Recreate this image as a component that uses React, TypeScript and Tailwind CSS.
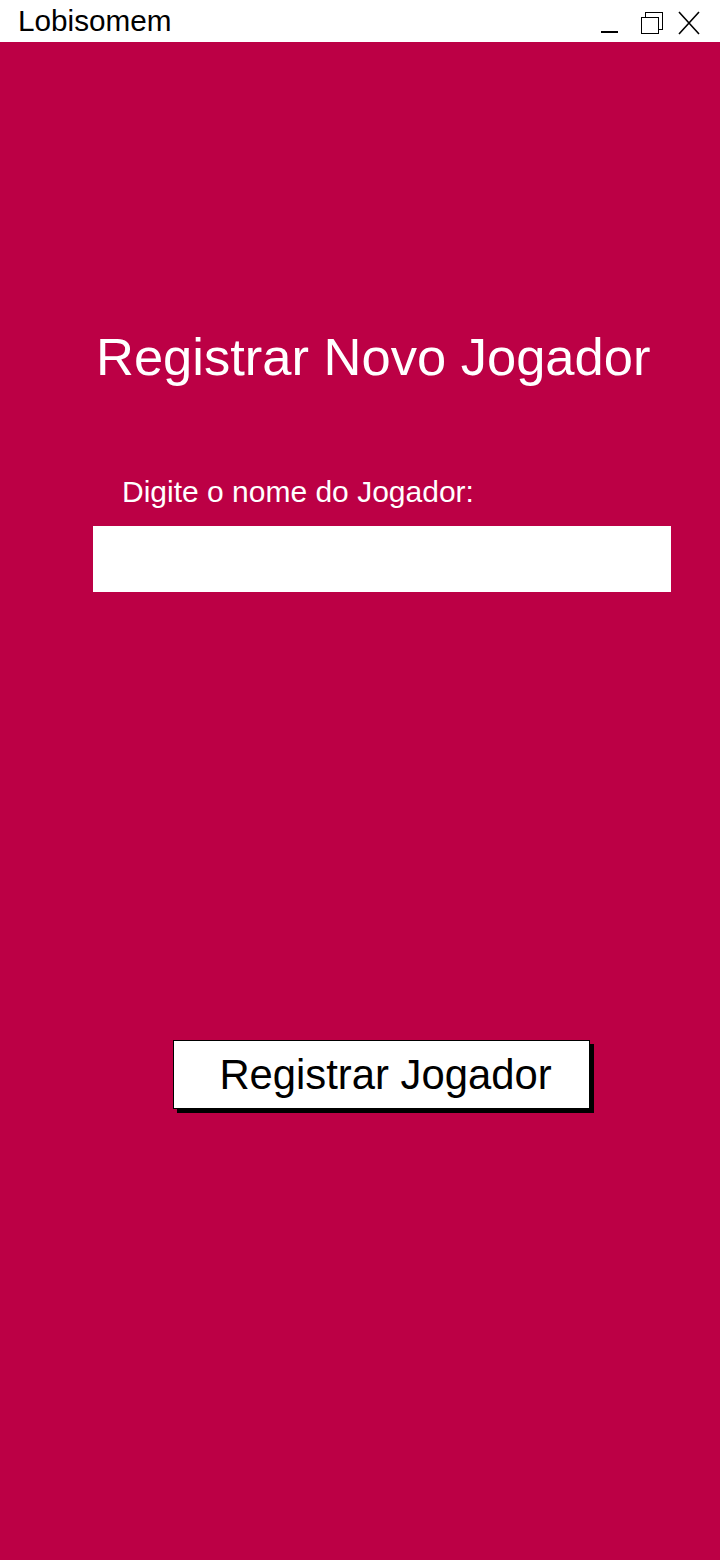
export default function App() {
  return (
    <div className="w-[720px] h-[1560px] flex flex-col bg-[#bc0045]" style={{ fontFamily: '"Liberation Sans", Arial, sans-serif' }}>
      <div className="h-[42px] bg-white flex items-center justify-between pl-[18px] pr-[20px] shrink-0">
        <span className="text-[29.7px] leading-none text-black">Lobisomem</span>
        <div className="flex items-start h-full">
          <svg width="17" height="42" viewBox="0 0 17 42" className="mr-[23px]"><rect x="0" y="31" width="17" height="2" fill="#000" /></svg>
          <svg width="22" height="42" viewBox="0 0 22 42" className="mr-[15px]">
            <rect x="4.5" y="12.5" width="17" height="17" fill="none" stroke="#000" strokeWidth="1" />
            <rect x="0.5" y="17.5" width="17" height="16" fill="#fff" stroke="#000" strokeWidth="1" />
          </svg>
          <svg width="22" height="42" viewBox="0 0 22 42">
            <path d="M1 12 L21 34 M21 12 L1 34" stroke="#000" strokeWidth="1.6" fill="none" />
          </svg>
        </div>
      </div>
      <div className="flex flex-col">
        <h1 className="mt-[285px] ml-[96px] text-[52.5px] leading-[60px] text-white font-normal whitespace-nowrap">Registrar Novo Jogador</h1>
        <div className="mt-[87px] ml-[122px] text-[30px] leading-[36px] text-white whitespace-nowrap">Digite o nome do Jogador:</div>
        <div className="mt-[16px] ml-[93px] w-[578px] h-[66px] bg-white"></div>
        <div className="mt-[448px] ml-[173px] w-[417px] h-[69px] bg-white border border-black shadow-[4px_4px_0_0_#000] flex items-center justify-center">
          <span className="text-[41.8px] leading-none text-black ml-[8px]">Registrar Jogador</span>
        </div>
      </div>
    </div>
  );
}
